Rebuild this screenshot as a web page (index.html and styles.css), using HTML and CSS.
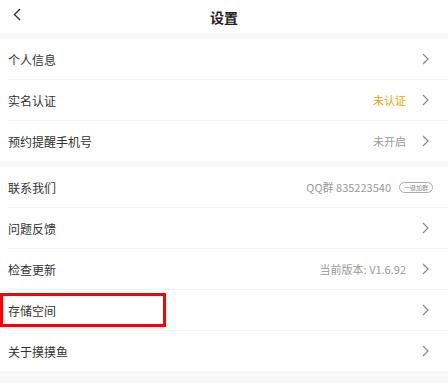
FILE: index.html
```html
<!DOCTYPE html>
<html lang="zh-CN">
<head>
  <meta charset="UTF-8">
  <meta name="viewport" content="width=device-width, initial-scale=1.0">
  <title>设置</title>
  <link rel="stylesheet" href="styles.css">
</head>
<body>
  <nav class="top-bar">
    <span class="back">
      <svg width="8" height="13" viewBox="0 0 8 13"><path d="M7 1 L1.5 6.5 L7 12" fill="none" stroke="#333" stroke-width="1.4"/></svg>
    </span>
    <span class="title">设置</span>
  </nav>

  <section class="group">
    <div class="row">
      <span class="label">个人信息</span>
      <svg class="arrow" viewBox="0 0 7 12"><path d="M1 1 L6 6 L1 11" fill="none" stroke="#8a8a8a" stroke-width="1.2"/></svg>
    </div>
    <div class="row">
      <span class="label">实名认证</span>
      <span class="value orange">未认证</span>
      <svg class="arrow" viewBox="0 0 7 12"><path d="M1 1 L6 6 L1 11" fill="none" stroke="#8a8a8a" stroke-width="1.2"/></svg>
    </div>
    <div class="row">
      <span class="label">预约提醒手机号</span>
      <span class="value">未开启</span>
      <svg class="arrow" viewBox="0 0 7 12"><path d="M1 1 L6 6 L1 11" fill="none" stroke="#8a8a8a" stroke-width="1.2"/></svg>
    </div>
  </section>

  <section class="group">
    <div class="row">
      <span class="label">联系我们</span>
      <span class="value">QQ群 835223540</span>
      <span class="pill">一键加群</span>
    </div>
    <div class="row">
      <span class="label">问题反馈</span>
      <svg class="arrow" viewBox="0 0 7 12"><path d="M1 1 L6 6 L1 11" fill="none" stroke="#8a8a8a" stroke-width="1.2"/></svg>
    </div>
    <div class="row">
      <span class="label">检查更新</span>
      <span class="value">当前版本: V1.6.92</span>
      <svg class="arrow" viewBox="0 0 7 12"><path d="M1 1 L6 6 L1 11" fill="none" stroke="#8a8a8a" stroke-width="1.2"/></svg>
    </div>
    <div class="row">
      <span class="label">存储空间</span>
      <svg class="arrow" viewBox="0 0 7 12"><path d="M1 1 L6 6 L1 11" fill="none" stroke="#8a8a8a" stroke-width="1.2"/></svg>
      <div class="mark"></div>
    </div>
    <div class="row">
      <span class="label">关于摸摸鱼</span>
      <svg class="arrow" viewBox="0 0 7 12"><path d="M1 1 L6 6 L1 11" fill="none" stroke="#8a8a8a" stroke-width="1.2"/></svg>
    </div>
  </section>
</body>
</html>
```

FILE: styles.css
```css
*{margin: 0; padding: 0; box-sizing: border-box; font-family: "Noto Sans CJK SC", "Liberation Sans", sans-serif;}

html,body{
  width: 100%;
  height: 100vh;
  background-color: #f7f7f7;
}

.top-bar{
  height: 33px;
  background-color: white;
  display: flex;
  align-items: center;
  justify-content: center;
  position: relative;
}
.top-bar .back{
  position: absolute;
  left: 13px;
  top: 8px;
  display: flex;
}
.top-bar .title{
  font-size: 14px;
  font-weight: bold;
  color: #222;
}

.group{
  margin-top: 6px;
  background-color: white;
}

.row{
  height: 41px;
  margin-left: 8px;
  padding-right: 19px;
  border-bottom: 1px solid #f3f3f3;
  display: flex;
  align-items: center;
  position: relative;
}
.row:last-child{
  height: 40px;
  border-bottom: none;
}
.row .label{
  flex: 1;
  font-size: 12px;
  color: #333;
}
.row .value{
  font-size: 11px;
  color: #999;
  margin-right: 16px;
}
.row .value.orange{
  color: #f5a000;
}
.row .arrow{
  width: 7px;
  height: 12px;
}
.row .pill{
  font-size: 6px;
  color: #888;
  border: 1px solid #aaa;
  border-radius: 6px;
  height: 11px;
  width: 34px;
  display: flex;
  align-items: center;
  justify-content: center;
  margin-right: -4px;
  margin-left: -8px;
}

.mark{
  position: absolute;
  left: -8px;
  top: 3px;
  width: 166px;
  height: 34px;
  border: 3.5px solid #ff0000;
}
```
